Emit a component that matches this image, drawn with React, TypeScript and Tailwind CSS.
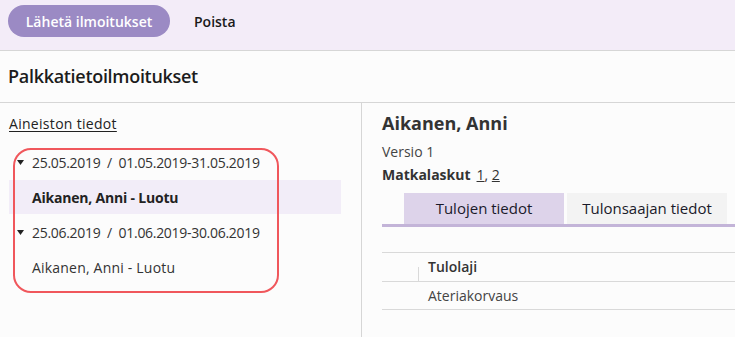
import React from 'react'

const font = { fontFamily: '"Open Sans", "Noto Sans", sans-serif' }

const Caret = () => (
    <svg width="7" height="5" viewBox="0 0 7 5" className="shrink-0">
        <path d="M0 0 L7 0 L3.5 5 Z" fill="#222" />
    </svg>
)

interface GroupProps {
    date: string;
    period: string;
    name: string;
    selected?: boolean;
}

const TreeGroup = ({ date, period, name, selected = false }: GroupProps) => (
    <div>
        <div className="h-[36px] flex items-center pl-[8px] gap-[8px] text-[14px] text-[#333]">
            <Caret />
            <span className="tracking-[-0.3px]">{date}&nbsp;&nbsp;/&nbsp;&nbsp;{period}</span>
        </div>
        <div className={`h-[34px] flex items-center pl-[23px] text-[14px] ${selected ? 'bg-[#f2edf8] font-bold text-[#222] tracking-[-0.2px]' : 'text-[#333] tracking-[0.2px]'}`}>
            {name}
        </div>
    </div>
)

export default function App() {
    return (
        <div className="w-[735px] h-[337px] bg-[#fcfcfc] overflow-hidden relative" style={font}>
            {/* Toolbar */}
            <div className="h-[51px] bg-[#f3ecf8] border-b border-[#d6d6d6] flex items-start pt-[5px] pl-[8px] gap-[24px]">
                <button className="h-[32px] w-[162px] rounded-full bg-[#9b8ac4] text-white text-[14px] font-semibold">
                    Lähetä ilmoitukset
                </button>
                <button className="h-[32px] text-[14px] font-semibold text-[#1a1a1a]">Poista</button>
            </div>

            {/* Title */}
            <div className="h-[52px] border-b border-[#d6d6d6] flex items-center pl-[8px]">
                <h1 className="text-[18px] font-semibold text-[#1c1c1c] tracking-[-0.3px]">Palkkatietoilmoitukset</h1>
            </div>

            <div className="flex h-[234px]">
                {/* Left panel */}
                <div className="w-[362px] border-r border-[#d6d6d6] pl-[9px] pr-[20px] pt-[8px]">
                    <a className="text-[14px] text-[#222] underline underline-offset-2 tracking-[0.3px]">Aineiston tiedot</a>
                    <div className="mt-[9px]">
                        <TreeGroup date="25.05.2019" period="01.05.2019-31.05.2019" name="Aikanen, Anni - Luotu" selected />
                        <TreeGroup date="25.06.2019" period="01.06.2019-30.06.2019" name="Aikanen, Anni - Luotu" />
                    </div>
                </div>

                {/* Right panel */}
                <div className="flex-1 pl-[20px] pt-[7px]">
                    <h2 className="text-[18px] font-bold text-[#333] leading-[26px]">Aikanen, Anni</h2>
                    <div className="text-[14px] text-[#444] mt-[6px] leading-[20px]">Versio 1</div>
                    <div className="text-[14px] text-[#333] mt-[3px] leading-[20px]">
                        <span className="font-bold">Matkalaskut</span>
                        <span className="ml-[6px] underline">1</span>,{' '}
                        <span className="underline">2</span>
                    </div>
                    <div className="mt-[8px]">
                        <div className="flex gap-[3px] pl-[22px]">
                            <div className="w-[160px] h-[31px] bg-[#ddd3ea] flex items-center justify-center text-[15px] text-[#1a1a2a]">
                                Tulojen tiedot
                            </div>
                            <div className="w-[160px] h-[31px] bg-[#f3f3f3] flex items-center justify-center text-[15px] text-[#1a1a2a]">
                                Tulonsaajan tiedot
                            </div>
                        </div>
                        <div className="h-[3px] bg-[#c3b4d8]" />
                    </div>
                    <div className="mt-[25px] border-t border-[#d9d9d9]">
                        <div className="h-[29px] flex border-b border-[#d9d9d9]">
                            <div className="w-[37px] flex items-end">
                                <div className="ml-auto w-px h-[14px] bg-[#d9d9d9]" />
                            </div>
                            <div className="flex items-center pl-[9px] pb-[2px] text-[14px] font-semibold text-[#333]">Tulolaji</div>
                        </div>
                        <div className="h-[28px] flex items-center pl-[46px] border-b border-[#d9d9d9] text-[14px] text-[#444]">
                            Ateriakorvaus
                        </div>
                    </div>
                </div>
            </div>

            {/* Annotation outline */}
            <div className="absolute left-[13px] top-[148px] w-[266px] h-[145px] border-2 border-[#f0575c] rounded-[18px] pointer-events-none" />
        </div>
    )
}
